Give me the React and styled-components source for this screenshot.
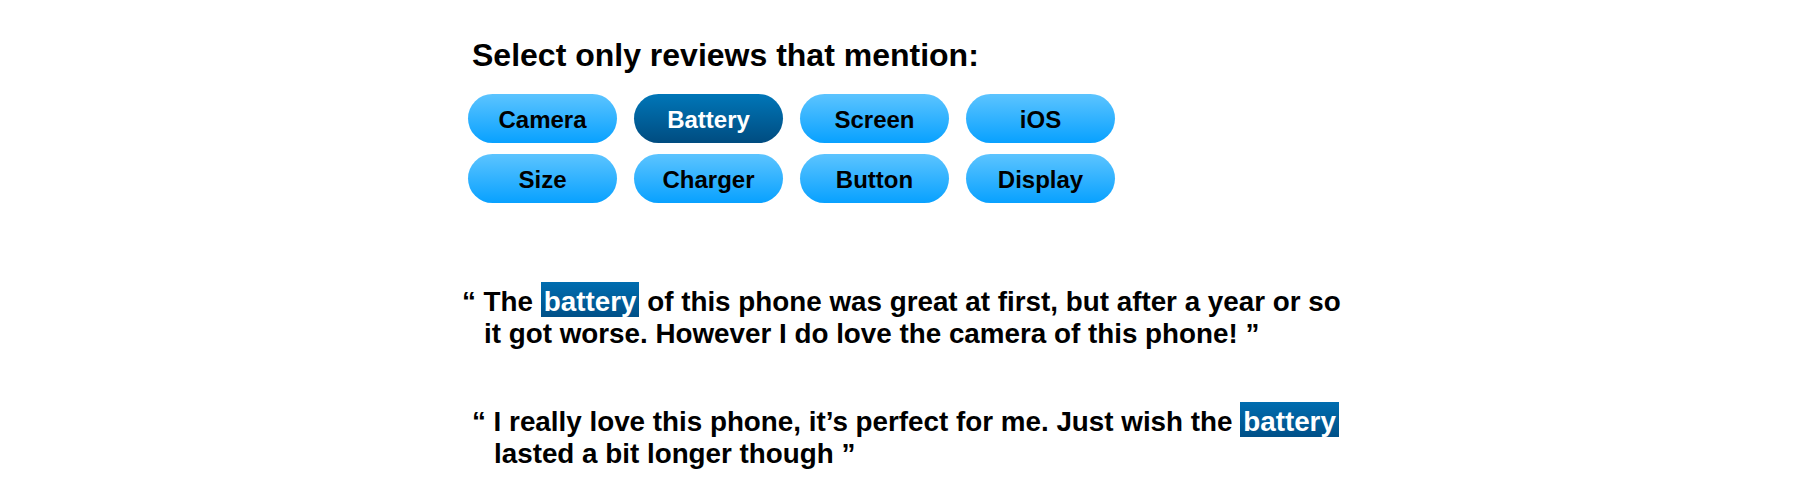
import React from "react";
import styled, { createGlobalStyle } from "styled-components";

const GlobalStyle = createGlobalStyle`
  html, body {
    margin: 0;
    padding: 0;
    background: #ffffff;
  }
  body {
    font-family: "Liberation Sans", Arial, Helvetica, sans-serif;
    color: #000000;
  }
`;

const Page = styled.div`
  display: flex;
  flex-direction: column;
  align-items: flex-start;
  padding: 38px 0 0 462px;
  min-height: 482px;
  box-sizing: border-box;
`;

const Filters = styled.section`
  display: flex;
  flex-direction: column;
  padding-left: 6px;
`;

const Heading = styled.h2`
  margin: 0 0 21px 4px;
  font-size: 32px;
  line-height: 35px;
  font-weight: 700;
`;

const TagGrid = styled.div`
  display: grid;
  grid-template-columns: repeat(4, 149px);
  column-gap: 17px;
  row-gap: 11px;
`;

const Tag = styled.button`
  height: 49px;
  border: none;
  border-radius: 25px;
  font-family: inherit;
  font-size: 24px;
  font-weight: 700;
  padding: 2px 0 0;
  cursor: pointer;
  color: ${(p) => (p.$active ? "#ffffff" : "#000000")};
  background: ${(p) =>
    p.$active
      ? "linear-gradient(to bottom, #0076b8, #004c80)"
      : "linear-gradient(to bottom, #5cc4ff, #08a1ff)"};
`;

const Reviews = styled.section`
  display: flex;
  flex-direction: column;
  gap: 56px;
  margin-top: 83px;
`;

const Review = styled.p`
  margin: 0;
  margin-left: ${(p) => p.$offset || 0}px;
  padding-left: 22px;
  text-indent: -22px;
  font-size: 27.8px;
  line-height: 32px;
  font-weight: 700;
`;

const Mark = styled.span`
  display: inline;
  padding: 4px 3px 0;
  color: #ffffff;
  background: linear-gradient(to bottom, #006db0, #005088);
`;

const tags = ["Camera", "Battery", "Screen", "iOS", "Size", "Charger", "Button", "Display"];

export default function App() {
  return (
    <>
      <GlobalStyle />
      <Page>
        <Filters>
          <Heading>Select only reviews that mention:</Heading>
          <TagGrid>
            {tags.map((t) => (
              <Tag key={t} $active={t === "Battery"}>
                {t}
              </Tag>
            ))}
          </TagGrid>
        </Filters>
        <Reviews>
          <Review>
            “ The <Mark>battery</Mark> of this phone was great at first, but after a year or so
            <br />
            it got worse. However I do love the camera of this phone! ”
          </Review>
          <Review $offset={10}>
            “ I really love this phone, it’s perfect for me. Just wish the <Mark>battery</Mark>
            <br />
            lasted a bit longer though ”
          </Review>
        </Reviews>
      </Page>
    </>
  );
}
